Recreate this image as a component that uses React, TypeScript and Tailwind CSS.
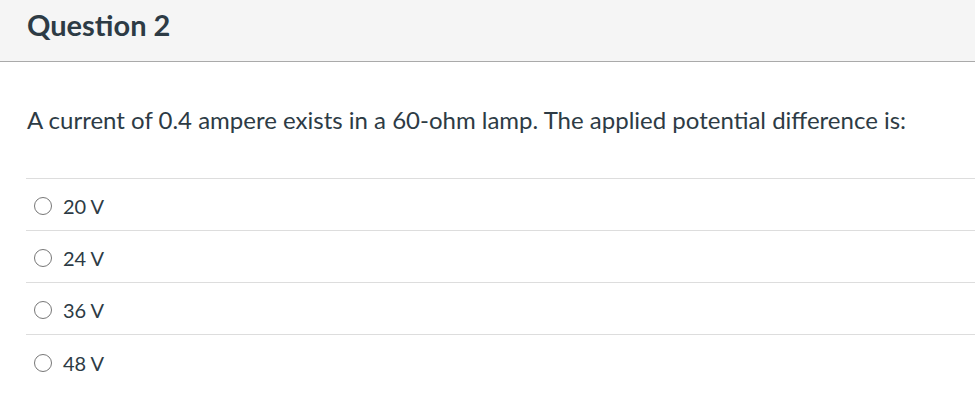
import React from 'react';

const answers = ['20 V', '24 V', '36 V', '48 V'];

const App = () => {
  return (
    <div className="min-h-screen bg-white text-[#2d3b45] font-['Lato',sans-serif]">
      <div className="h-[62px] bg-[#f5f5f5] border-b border-[#aaaaaa] px-[27px] pt-[10px]">
        <h2 className="text-[29px] font-bold leading-none">Question 2</h2>
      </div>

      <div className="pl-[26px]">
        <p className="pt-[44px] pb-[44px] text-[24px] leading-[28px] pl-px">
          A current of 0.4 ampere exists in a 60-ohm lamp. The applied potential difference is:
        </p>

        <div className="border-t border-[#dddddd]">
          {answers.map((a, i) => (
            <label
              key={a}
              className={`flex items-center h-[52px] gap-[11px] pl-[8px] pt-[3px] ${i < answers.length - 1 ? 'border-b border-[#dddddd]' : ''}`}
            >
              <span className="w-[18px] h-[18px] rounded-full border-[1.5px] border-[#777777] bg-white" />
              <span className="text-[20px] leading-none">{a}</span>
            </label>
          ))}
        </div>
      </div>
    </div>
  );
};

export default App;
